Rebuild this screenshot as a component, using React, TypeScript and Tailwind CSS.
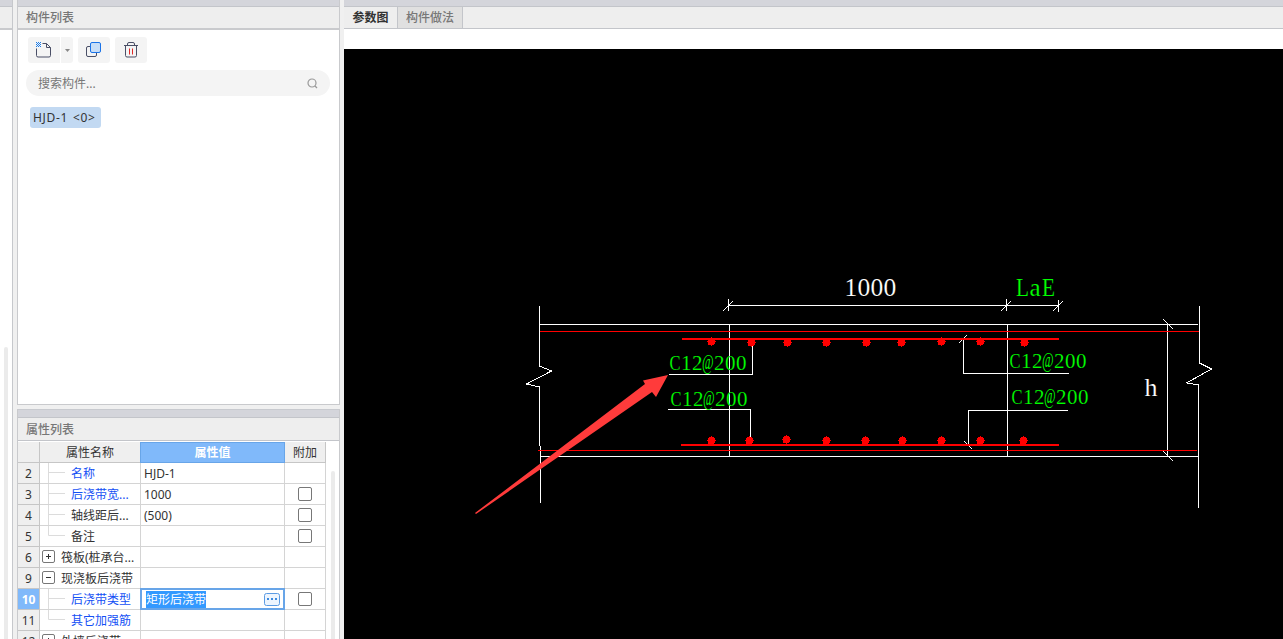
import { clsx } from "clsx";

type Row = {
  no: number;
  name: string;
  value?: string;
  blue?: boolean;
  check?: boolean;
  toggle?: "+" | "-";
  last?: boolean;
  active?: boolean;
};

const ROWS: Row[] = [
  { no: 2, name: "名称", value: "HJD-1", blue: true },
  { no: 3, name: "后浇带宽...", value: "1000", blue: true, check: true },
  { no: 4, name: "轴线距后...", value: "(500)", check: true },
  { no: 5, name: "备注", check: true, last: true },
  { no: 6, name: "筏板(桩承台...", toggle: "+" },
  { no: 9, name: "现浇板后浇带", toggle: "-" },
  { no: 10, name: "后浇带类型", value: "矩形后浇带", blue: true, check: true, active: true },
  { no: 11, name: "其它加强筋", blue: true, last: true },
  { no: 12, name: "外墙后浇带", toggle: "+" },
];

const TOP_BARS = [[711, 342], [751, 343], [787, 343], [826, 343], [866, 343], [901, 343], [941, 342], [980, 342], [1024, 343]];
const BOTTOM_BARS = [[711, 441], [749, 441], [786, 440], [826, 441], [865, 441], [902, 441], [941, 441], [980, 441], [1023, 441]];

function NewIcon() {
  return (
    <svg width="18" height="18" viewBox="0 0 18 18" fill="none">
      <path d="M7.500 2.500h4l4 4v8a1.500 1.500 0 0 1-1.500 1.500H3A1.500 1.500 0 0 1 1.500 14.500v-7" stroke="#4a4f66" />
      <path d="M11.500 2.500v4h4" stroke="#4a4f66" />
      <path d="M1 1.500h5M1 3.500h5M1 5.500h5" stroke="#1a7be8" strokeDasharray="1 1" />
      <path d="M2 2.500h4M2 4.500h4" stroke="#1a7be8" strokeDasharray="1 1" />
    </svg>
  );
}

function CopyIcon() {
  return (
    <svg width="18" height="18" viewBox="0 0 18 18" fill="none">
      <rect x="1.500" y="5.500" width="10" height="10" rx="1.500" stroke="#4a4f66" />
      <rect x="5.500" y="1.500" width="10" height="10" rx="1.500" fill="#c8def7" stroke="#1a73e8" />
    </svg>
  );
}

function TrashIcon() {
  return (
    <svg width="18" height="18" viewBox="0 0 18 18" fill="none">
      <path d="M2 4.500h14M5.500 4V3A1.500 1.500 0 0 1 7 1.500h4A1.500 1.500 0 0 1 12.500 3v1M3.500 5v9.500A1.500 1.500 0 0 0 5 16h8a1.500 1.500 0 0 0 1.500-1.500V5" stroke="#4a4f66" />
      <path d="M7.500 7.500v6M10.500 7.500v6" stroke="#e02828" />
    </svg>
  );
}

function PanelHeader({ title }: { title: string }) {
  return (
    <>
      <div className="h-[9px] shrink-0 border-y border-t-[#c8cacf] border-b-[#c3c5ca] bg-[#d4d5db]" />
      <div className="flex h-[23px] shrink-0 items-center border-b border-[#c3c5ca] bg-[#eee] pt-px pl-2 font-medium text-[#777]">{title}</div>
    </>
  );
}

function TreeCell({ row }: { row: Row }) {
  if (row.toggle) {
    return (
      <>
        <span className="mb-px ml-0.5 flex w-[13px] shrink-0 items-center justify-center">
          <svg width="13" height="13" viewBox="0 0 13 13" fill="none" stroke="#777">
            <rect x=".5" y=".5" width="12" height="12" rx="1.500" />
            <path d={row.toggle === "+" ? "M4 6.500h5M6.500 4v5" : "M4 6.500h5"} stroke="#333" />
          </svg>
        </span>
        <span className="ml-1.5 pt-0.5">{row.name}</span>
      </>
    );
  }
  return (
    <>
      <svg className="ml-2 shrink-0" width="23" height="20" fill="none" stroke="#dcdcdc">
        <path d={row.last ? "M.5 0v9.500H17" : "M.5 0v20M.5 9.500H17"} />
      </svg>
      <span className={clsx("pt-0.5", row.blue && "text-[#1450f5]")}>{row.name}</span>
    </>
  );
}

function PropertyRow({ row }: { row: Row }) {
  return (
    <div className="flex h-[21px] shrink-0 whitespace-nowrap">
      <div
        className={clsx(
          "flex w-[22px] items-center justify-center border-r border-b border-[#c6c6c6] pt-0.5",
          row.active ? "bg-[#80b9fa] font-bold text-white" : "bg-[#efefef]",
        )}
      >
        {row.no}
      </div>
      <div className="flex w-[101px] items-center overflow-hidden border-r border-b border-[#d4d4d4]">
        <TreeCell row={row} />
      </div>
      {row.active ? (
        <div className="-mt-px -ml-px flex h-[22px] w-[145px] items-center border-2 border-[#68a5e8] pr-[3px] pl-1">
          <span className="flex h-[17px] items-center bg-[#3399ff] pt-0.5 text-white">{row.value}</span>
          <svg className="ml-auto" width="16" height="13" viewBox="0 0 16 13">
            <rect x=".5" y=".5" width="15" height="12" rx="2" fill="#edf5fe" stroke="#5b9be3" />
            <path d="M3 5h2v2H3zM7 5h2v2H7zM11 5h2v2h-2z" fill="#3d8be0" />
          </svg>
        </div>
      ) : (
        <div className="flex w-[144px] items-center border-r border-b border-[#d4d4d4] pt-0.5 pl-[3px]">{row.value}</div>
      )}
      <div className="flex w-[41px] items-center justify-center border-r border-b border-[#d4d4d4]">
        {row.check && <span className="size-[14px] rounded-xs border border-[#777] bg-white" />}
      </div>
    </div>
  );
}

// Half-width drafting label: every glyph sits in a cell of the same width
function CadText({ x, y, size, step, fill, text }: { x: number; y: number; size: number; step: number; fill: string; text: string }) {
  return (
    <g fill={fill} stroke="#000" strokeWidth=".15" fontSize={size} fontFamily="'Liberation Serif', serif">
      {[...text].map((char, i) => {
        const left = x + i * step;
        if (char === "@") return <text key={i} transform={`translate(${left - 0.5} ${y - 1}) scale(.6 .98)`} stroke="none">@</text>;
        if (/[CLE]/.test(char)) {
          return <text key={i} x={left} y={y} textLength={step} lengthAdjust="spacingAndGlyphs">{char}</text>;
        }
        return <text key={i} x={left + 0.5} y={y}>{char}</text>;
      })}
    </g>
  );
}

function Drawing() {
  return (
    <svg className="block" width="939" height="590" viewBox="344 49 939 590" fill="none">
      <rect x="344" y="49" width="939" height="590" fill="#000" />

      <g stroke="#fff" shapeRendering="crispEdges">
        <path d="M539.500 306v60l12 5-25 13 13 3v59M540.500 446v57" />
        <path d="M1199.500 306v57l12 6-25 14 12 2v123" />
        <path d="M540 324.500h658M541 456.500h657" />
        <path d="M729.500 324v132M1007.500 324v132" />
        <path d="M728.500 299v12M1006.500 299v12M1058.500 300v12M728 305.500h331" />
        <path d="M723 311l10-10M1001 311l10-10M1053 311l10-10" />
        <path d="M1167.500 324v133M1163 319l10 10M1163 451l10 10" />
        <path d="M669 374.500h83.500V342M668 409.500h82.500V440" />
        <path d="M1069 373.500H963.500V339M1068 410.500H968.500V445" />
        <path d="M959 343l8-8M964 441l8 8" />
      </g>

      <g stroke="#f00" shapeRendering="crispEdges">
        <path d="M540 331.500h659M538 450.500h659" />
        <path d="M682 339h377M681 445h378" strokeWidth="2" />
      </g>
      {[...TOP_BARS, ...BOTTOM_BARS].map(([x, y]) => (
        <g key={`${x}-${y}`} fill="#f00" shapeRendering="crispEdges">
          <circle cx={x + 0.5} cy={y - 0.5} r="4" />
          <path d={`M${x - 4} ${y - 1}h9v1h-9zM${x} ${y - 5}h1v9h-1z`} />
        </g>
      ))}

      <CadText x={844} y={296} size={25.5} step={13} fill="#fff" text="1000" />
      <CadText x={1144} y={396} size={26} step={13} fill="#fff" text="h" />
      <CadText x={1016} y={296} size={25} step={13} fill="#0f0" text="LaE" />
      <CadText x={669.5} y={370} size={21} step={11} fill="#0f0" text="C12@200" />
      <CadText x={670.5} y={406} size={21} step={11} fill="#0f0" text="C12@200" />
      <CadText x={1009.5} y={368} size={21} step={11} fill="#0f0" text="C12@200" />
      <CadText x={1011.5} y={404} size={21} step={11} fill="#0f0" text="C12@200" />

      <path d="M475 513L645 384 643 380.500 668 375 656 397 652 392 476 514z" fill="#ff3b3b" />
    </svg>
  );
}

export default function App() {
  return (
    <div className="flex h-[639px] w-[1283px] overflow-hidden bg-[#f0f0f0] font-['Noto_Sans','Noto_Sans_CJK_SC',sans-serif] text-[12px] leading-none text-[#333]">
      <div className="flex w-[13px] flex-col border-r border-[#c6c8cc] bg-white">
        <div className="h-[7px] border-b border-[#c3c5ca] bg-[#d4d5db]" />
        <div className="h-[23px] border-b-2 border-[#c9cacd] bg-[#eee]" />
        <div className="mt-[317px] ml-1 h-[292px] w-1 rounded-t-full bg-[#ebebeb]" />
      </div>

      <div className="ml-1 flex w-[323px] flex-col">
        <section className="flex h-[405px] shrink-0 flex-col border-x border-b border-[#c9cacd] bg-white">
          <div className="h-[7px] shrink-0 border-b border-[#c3c5ca] bg-[#d4d5db]" />
          <div className="flex h-[23px] shrink-0 items-center border-b-2 border-[#c9cacd] bg-[#eee] pt-px pl-2 font-medium text-[#777]">构件列表</div>
          <div className="mt-[7px] ml-[10px] flex h-[26px]">
            <button className="flex w-8 items-center justify-center rounded-l-[3px] bg-[#f4f4f4]"><NewIcon /></button>
            <button className="ml-px flex w-3 items-center justify-center rounded-r-[3px] bg-[#f4f4f4]">
              <svg width="5" height="3"><path d="M0 0h5L2.500 3z" fill="#888" /></svg>
            </button>
            <button className="ml-[5px] flex w-8 items-center justify-center rounded-[3px] bg-[#f4f4f4]"><CopyIcon /></button>
            <button className="ml-[5px] flex w-8 items-center justify-center rounded-[3px] bg-[#f4f4f4]"><TrashIcon /></button>
          </div>
          <div className="mt-[7px] ml-2 flex h-[26px] w-[304px] items-center justify-between rounded-full bg-[#f4f4f4] pr-3 pl-3 text-[#777]">
            <span className="pt-0.5">搜索构件...</span>
            <svg width="11" height="11" viewBox="0 0 11 11" fill="none" stroke="#999" strokeWidth="1.200">
              <circle cx="5" cy="5" r="4" />
              <path d="M8 8l2 2" />
            </svg>
          </div>
          <div className="mt-[11px] ml-3 flex h-[21px] w-[71px] items-center rounded-[3px] bg-[#c2d9f2] pl-[3px] tracking-[0.7px] whitespace-nowrap [word-spacing:1px]">
            {"HJD-1 <0>"}
          </div>
        </section>

        <section className="mt-1 flex h-[230px] flex-col overflow-hidden border-x border-[#c9cacd] bg-white">
          <PanelHeader title="属性列表" />
          <div className="flex">
            <div className="flex w-[308px] shrink-0 flex-col">
              <div className="flex h-[22px] shrink-0 pt-px">
                <div className="w-[22px] border-r border-b border-[#c6c6c6] bg-[#efefef]" />
                <div className="flex w-[100px] items-center justify-center border-b border-[#c6c6c6] bg-[#efefef] pt-0.5">属性名称</div>
                <div className="flex w-[145px] items-center justify-center border border-[#68a5e8] bg-[#80b9fa] pt-px font-bold text-white">属性值</div>
                <div className="flex w-[41px] items-center justify-center border-r border-b border-[#c6c6c6] bg-[#efefef] pt-0.5">附加</div>
              </div>
              {ROWS.map((row) => (
                <PropertyRow key={row.no} row={row} />
              ))}
            </div>
            <div className="mt-[30px] ml-[5px] w-1 rounded-t-full bg-[#ebebeb]" />
          </div>
        </section>
      </div>

      <main className="ml-1 flex w-[939px] flex-col bg-white">
        <div className="h-[7px] shrink-0 border-b border-[#c3c5ca] bg-[#d4d5db]" />
        <nav className="flex h-[22px] shrink-0 border-b border-[#c3c5ca] bg-[#eee]">
          <div className="flex w-[54px] items-center justify-center border-r border-[#c3c5ca] pt-px font-bold">参数图</div>
          <div className="flex w-[65px] items-center justify-center border-r border-[#c3c5ca] bg-[#e0e0e0] pt-px font-medium text-[#777]">构件做法</div>
        </nav>
        <div className="mt-5">
          <Drawing />
        </div>
      </main>
    </div>
  );
}
